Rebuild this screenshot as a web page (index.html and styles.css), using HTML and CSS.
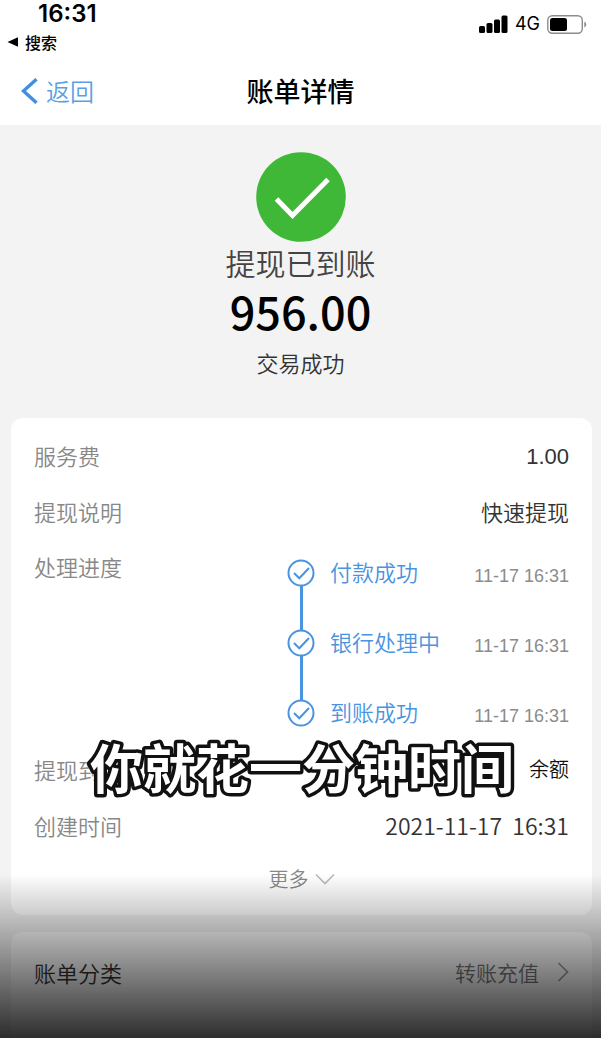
FILE: index.html
```html
<!DOCTYPE html>
<html lang="zh-CN">
<head>
    <meta charset="UTF-8">
    <meta name="viewport" content="width=device-width, initial-scale=1.0">
    <title>账单详情</title>
    <link rel="stylesheet" href="styles.css">
</head>
<body>
    <header class="top">
        <div class="status-bar">
            <div class="status-left">
                <span class="clock">16:31</span>
                <a class="search-link" href="#">
                    <svg width="12" height="10" viewBox="0 0 12 10"><path d="M0.500 5L11 0.300V9.700Z" fill="#000"/></svg>
                    搜索
                </a>
            </div>
            <div class="status-right">
                <svg width="29" height="18" viewBox="0 0 29 18">
                    <rect x="0" y="11" width="6" height="7" rx="1.500"/>
                    <rect x="7.500" y="8" width="6" height="10" rx="1.500"/>
                    <rect x="15" y="4.500" width="6" height="13.500" rx="1.500"/>
                    <rect x="22.500" y="0.500" width="6" height="17.500" rx="1.500"/>
                </svg>
                <span class="network">4G</span>
                <svg width="40" height="19" viewBox="0 0 40 19">
                    <rect x="0.800" y="0.800" width="34.500" height="17.400" rx="4.500" fill="none" stroke="#8c8c8c" stroke-width="1.400"/>
                    <rect x="3" y="3" width="17" height="13" rx="2.500"/>
                    <path d="M37.300 6.500Q39.300 7.500 39.300 9.500T37.300 12.500Z" fill="#8c8c8c"/>
                </svg>
            </div>
        </div>
        <nav class="nav-bar">
            <a class="back" href="#">
                <svg width="17" height="26" viewBox="0 0 17 26"><path d="M15.500 1.200L2.500 13L15.500 24.800" fill="none" stroke="#418ee3" stroke-width="3.400"/></svg>
                返回
            </a>
            <h1 class="title">账单详情</h1>
        </nav>
    </header>

    <main class="content">
        <section class="result">
            <svg class="result-icon" width="90" height="90" viewBox="0 0 90 90">
                <circle cx="45" cy="45" r="44.800" fill="#40b837"/>
                <path d="M20.500 47L36.500 63.500L72 27.500" fill="none" stroke="#fff" stroke-width="5"/>
            </svg>
            <p class="result-name">提现已到账</p>
            <p class="amount">956.00</p>
            <p class="result-state">交易成功</p>
        </section>

        <section class="card">
            <div class="row">
                <span class="label">服务费</span>
                <span class="value fee">1.00</span>
            </div>
            <div class="row">
                <span class="label">提现说明</span>
                <span class="value">快速提现</span>
            </div>
            <div class="progress">
                <span class="label progress-label">处理进度</span>
                <ol class="steps">
                    <li class="step">
                        <svg class="step-icon" width="28" height="28" viewBox="0 0 28 28"><circle cx="14" cy="14" r="12.500"/><path d="M7 14L12.300 19.300L22 9"/></svg>
                        <span class="step-name">付款成功</span>
                        <time class="step-time">11-17 16:31</time>
                    </li>
                    <li class="step">
                        <svg class="step-icon" width="28" height="28" viewBox="0 0 28 28"><circle cx="14" cy="14" r="12.500"/><path d="M7 14L12.300 19.300L22 9"/></svg>
                        <span class="step-name">银行处理中</span>
                        <time class="step-time">11-17 16:31</time>
                    </li>
                    <li class="step">
                        <svg class="step-icon" width="28" height="28" viewBox="0 0 28 28"><circle cx="14" cy="14" r="12.500"/><path d="M7 14L12.300 19.300L22 9"/></svg>
                        <span class="step-name">到账成功</span>
                        <time class="step-time">11-17 16:31</time>
                    </li>
                </ol>
            </div>
            <div class="row row-account">
                <span class="label">提现到</span>
                <span class="value account">余额</span>
                <svg class="caption" width="440" height="56">
                    <text x="50%" y="48" text-anchor="middle">你就花一分钟时间</text>
                </svg>
            </div>
            <div class="row">
                <span class="label">创建时间</span>
                <time class="value created">2021-11-17&nbsp; 16:31</time>
            </div>
            <button class="more" type="button">
                更多
                <svg width="20" height="12" viewBox="0 0 20 12"><path d="M1 1.500L10 10.500L19 1.500" fill="none" stroke="#bbb" stroke-width="1.600"/></svg>
            </button>
        </section>

        <section class="card card-last">
            <a class="category" href="#">
                <span class="category-name">账单分类</span>
                <span class="category-value">转账充值</span>
                <svg width="12" height="20" viewBox="0 0 12 20"><path d="M1.500 1L10.500 10L1.500 19" fill="none" stroke="#999" stroke-width="1.600"/></svg>
            </a>
        </section>
    </main>
    <div class="shade"></div>
</body>
</html>
```

FILE: styles.css
```css
* {
    box-sizing: border-box;
}
body {
    margin: 0;
    min-height: 100vh;
    display: flex;
    flex-direction: column;
    background: #f3f3f3;
    color: #333;
    font-family: "Noto Sans CJK SC", sans-serif;
    font-size: 22px;
    font-weight: 350;
    line-height: 32px;
}
h1, p, ol {
    margin: 0;
    padding: 0;
}
a {
    color: inherit;
    text-decoration: none;
}
svg {
    display: block;
    flex: none;
}

/* header */
.top {
    background: #fff;
    height: 125px;
}
.status-bar {
    display: flex;
    justify-content: space-between;
    height: 58px;
    padding: 0 14px 0 7px;
    color: #000;
}
.status-left {
    display: flex;
    flex-direction: column;
}
.clock {
    padding-left: 31px;
    font-family: Inter, sans-serif;
    font-size: 24px;
    font-weight: 600;
    line-height: 28px;
}
.search-link {
    display: flex;
    align-items: center;
    gap: 6px;
    font-size: 16px;
    font-weight: 500;
    line-height: 28px;
}
.status-right {
    display: flex;
    align-items: center;
    gap: 7px;
    height: 48px;
}
.network {
    font-family: Inter, sans-serif;
    font-size: 18px;
    font-weight: 400;
}
.nav-bar {
    display: grid;
    grid-template-columns: 1fr auto 1fr;
    align-items: center;
    height: 66px;
    padding: 0 21px;
}
.back {
    display: flex;
    align-items: center;
    gap: 8px;
    color: #5a9fe6;
    font-size: 24px;
}
.title {
    color: #000;
    font-size: 27px;
    font-weight: 500;
}

/* result */
.content {
    flex: 1;
    display: flex;
    flex-direction: column;
}
.result {
    display: flex;
    flex-direction: column;
    align-items: center;
    height: 293px;
    padding-top: 27px;
}
.result-name {
    color: #444;
    font-size: 30px;
    line-height: 40px;
}
.amount {
    color: #000;
    font-size: 45px;
    font-weight: 500;
    line-height: 58px;
}
.result-state {
    padding-top: 6px;
}

/* cards */
.card {
    margin: 0 9px 17px 11px;
    padding: 9px 23px 11px;
    border-radius: 12px;
    background: #fff;
}
.row {
    display: flex;
    align-items: center;
    justify-content: space-between;
    height: 56px;
}
.label {
    color: #888;
}
.fee {
    padding-top: 4px;
    font-family: "Liberation Sans", sans-serif;
    font-weight: 400;
}
.progress {
    display: grid;
    grid-template-columns: 1fr 282px;
    height: 202px;
}
.progress-label {
    padding-top: 11px;
}
.steps {
    list-style: none;
    padding-top: 20px;
}
.step {
    position: relative;
    display: flex;
    gap: 15px;
    height: 70px;
    line-height: 24px;
}
.step:not(:last-child)::before {
    content: "";
    position: absolute;
    top: 27px;
    left: 13px;
    width: 3px;
    height: 44px;
    background: #4a93df;
}
.step-icon {
    fill: none;
    stroke: #4a93df;
    stroke-width: 2;
}
.step-name {
    flex: 1;
    color: #4a93df;
}
.step-time {
    padding-top: 5px;
    color: #8c8c8c;
    font-family: "Liberation Sans", sans-serif;
    font-size: 18px;
    font-weight: 400;
}
.row-account {
    position: relative;
}
.account {
    color: #111;
    font-size: 20px;
}
.created {
    font-size: 23px;
}

/* subtitle over the card */
.caption {
    position: absolute;
    bottom: 0;
    left: 50%;
    transform: translateX(-50%);
    overflow: visible;
    fill: #fff;
    stroke: #111;
    stroke-width: 7px;
    stroke-linejoin: round;
    paint-order: stroke fill;
    font-size: 53px;
    font-weight: 700;
}
.more {
    display: flex;
    align-items: center;
    justify-content: center;
    gap: 6px;
    width: 100%;
    height: 51px;
    padding: 0;
    border: none;
    background: none;
    color: #888;
    font: inherit;
    font-size: 20px;
}
.card-last {
    flex: 1;
    margin-bottom: 0;
    padding: 0 23px;
    border-radius: 12px 12px 0 0;
}
.category {
    display: flex;
    align-items: center;
    gap: 18px;
    height: 80px;
}
.category-name {
    flex: 1;
}
.category-value {
    color: #777;
    font-size: 21px;
}

/* dark fade along the bottom edge */
.shade {
    position: fixed;
    right: 0;
    bottom: 0;
    left: 0;
    height: 164px;
    background: linear-gradient(rgba(0, 0, 0, 0), rgba(0, 0, 0, 0.82));
    pointer-events: none;
}
```
